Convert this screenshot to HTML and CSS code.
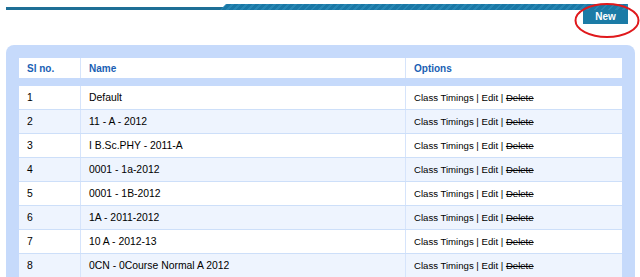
FILE: index.html
```html
<!DOCTYPE html>
<html lang="en">
<head>
  <meta charset="UTF-8" />
  <title>Batches</title>
  <link rel="stylesheet" href="styles.css">
</head>
<body>
  <div class="topbar">
    <div class="topbar-line"></div>
    <div class="topbar-band"></div>
  </div>

  <div class="toolbar">
    <a class="btn-new" href="#">New</a>
    <svg class="mark" width="68" height="38" viewBox="0 0 68 38">
      <ellipse cx="33" cy="18.5" rx="31.5" ry="16.5" fill="none" stroke="#e0191c" stroke-width="2" />
    </svg>
  </div>

  <div class="panel">
    <table class="list">
      <thead>
        <tr>
          <th class="col-no">Sl no.</th>
          <th class="col-name">Name</th>
          <th class="col-opt">Options</th>
        </tr>
      </thead>
      <tbody>
        <tr><td>1</td><td>Default</td><td class="opt">Class Timings | Edit | <s>Delete</s></td></tr>
        <tr><td>2</td><td>11 - A - 2012</td><td class="opt">Class Timings | Edit | <s>Delete</s></td></tr>
        <tr><td>3</td><td>I B.Sc.PHY - 2011-A</td><td class="opt">Class Timings | Edit | <s>Delete</s></td></tr>
        <tr><td>4</td><td>0001 - 1a-2012</td><td class="opt">Class Timings | Edit | <s>Delete</s></td></tr>
        <tr><td>5</td><td>0001 - 1B-2012</td><td class="opt">Class Timings | Edit | <s>Delete</s></td></tr>
        <tr><td>6</td><td>1A - 2011-2012</td><td class="opt">Class Timings | Edit | <s>Delete</s></td></tr>
        <tr><td>7</td><td>10 A - 2012-13</td><td class="opt">Class Timings | Edit | <s>Delete</s></td></tr>
        <tr><td>8</td><td>0CN - 0Course Normal A 2012</td><td class="opt">Class Timings | Edit | <s>Delete</s></td></tr>
      </tbody>
    </table>
  </div>
</body>
</html>
```

FILE: styles.css
```css
body {
  margin: 0;
  padding: 0;
  background: #fff;
  color: #000;
  font-family: "Liberation Sans", Arial, sans-serif;
  overflow: hidden;
}

.topbar {
  display: flex;
  align-items: flex-end;
  height: 10px;
  margin: 0 12px 0 6px;
}

.topbar-line {
  width: 218px;
  height: 3px;
  background: #1e6f96;
}

.topbar-band {
  flex: 1;
  height: 6px;
  margin-left: -4px;
  background: repeating-linear-gradient(135deg, #1a78a6 0 3px, #2686b3 3px 5px);
  clip-path: polygon(6px 0, 100% 0, 100% 100%, 0 100%);
}

.toolbar {
  position: relative;
  display: flex;
  justify-content: flex-end;
  margin: 0 12px 0 6px;
}

.btn-new {
  display: block;
  width: 45px;
  height: 14px;
  line-height: 13px;
  background: #1b7ba6;
  color: #fff;
  font-size: 10px;
  font-weight: bold;
  text-align: center;
  text-decoration: none;
}

.mark {
  position: absolute;
  right: -14px;
  top: -8px;
}

.panel {
  margin: 21px 5px 0 6px;
  padding: 13px;
  background: #c6dafb;
  border-radius: 8px;
}

.list {
  width: 100%;
  border-collapse: collapse;
  font-size: 10.4px;
}

.list th {
  height: 20px;
  padding: 0 0 0 8px;
  background: #fff;
  color: #1a5fb4;
  font-size: 10px;
  text-align: left;
  border-left: 1px solid #d6e4fb;
  border-bottom: 8px solid #c6dafb;
}

.list th:first-child {
  border-left: none;
}

.col-no {
  width: 53px;
}

.col-name {
  width: 316px;
}

.list td {
  height: 23px;
  padding: 0 0 0 8px;
  background: #fff;
  border-left: 1px solid #d6e4fb;
  border-bottom: 1px solid #cddff9;
}

.list td:first-child {
  border-left: none;
}

.list tbody tr:nth-child(even) td {
  background: #eef4fe;
}

.list td.opt {
  font-size: 9.6px;
}
```
